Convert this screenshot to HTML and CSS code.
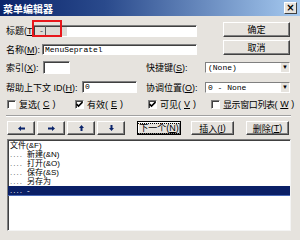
FILE: index.html
```html
<!DOCTYPE html>
<html lang="zh-CN">
<head>
    <meta charset="UTF-8">
    <title>菜单编辑器</title>
    <link rel="stylesheet" href="styles.css">
</head>
<body>
    <div class="window">
        <div class="titlebar">
            <span class="title">菜单编辑器</span>
            <span class="close-btn">×</span>
        </div>

        <div class="top">
            <div class="fields">
                <div class="row row-caption">
                    <label class="lbl lbl-caption">标题(<u>T</u>):</label>
                    <div class="input input-caption"><span class="caret">-</span></div>
                </div>
                <div class="row row-name">
                    <label class="lbl lbl-name">名称(<u>M</u>):</label>
                    <div class="input input-name mono">MenuSepratel</div>
                </div>
            </div>
            <div class="actions">
                <div class="btn btn-wide">确定</div>
                <div class="btn btn-wide">取消</div>
            </div>
            <!-- highlight drawn over the caption box -->
            <div class="marker"></div>
        </div>

        <div class="row row-index">
            <label class="lbl lbl-index">索引(<u>X</u>):</label>
            <div class="input input-index"></div>
            <label class="lbl lbl-right">快捷键(<u>S</u>):</label>
            <div class="combo"><span class="mono">(None)</span><span class="drop">▼</span></div>
        </div>

        <div class="row row-help">
            <label class="lbl lbl-help">帮助上下文 ID(<u>H</u>):</label>
            <div class="input input-help mono">0</div>
            <label class="lbl lbl-right lbl-neg">协调位置(<u>O</u>):</label>
            <div class="combo"><span class="mono">0 - None</span><span class="drop">▼</span></div>
        </div>

        <div class="row checks">
            <div class="check check-1"><span class="box"></span>复选(<u>C</u>)</div>
            <div class="check check-2"><span class="box"><svg width="7" height="7" viewBox="0 0 7 7"><path d="M0.5 3 L2.5 5 L6.5 1" fill="none" stroke="#000" stroke-width="1.6"/></svg></span>有效(<u>E</u>)</div>
            <div class="check check-3"><span class="box"><svg width="7" height="7" viewBox="0 0 7 7"><path d="M0.5 3 L2.5 5 L6.5 1" fill="none" stroke="#000" stroke-width="1.6"/></svg></span>可见(<u>V</u>)</div>
            <div class="check check-4"><span class="box"></span>显示窗口列表(<u>W</u>)</div>
        </div>

        <div class="separator"></div>

        <div class="row buttons">
            <div class="btn btn-arrow"><svg width="7" height="5" viewBox="0 0 7 5"><path d="M0 2.5 L3 0 V1.5 H7 V3.5 H3 V5 Z" fill="#0a246a"/></svg></div>
            <div class="btn btn-arrow"><svg width="7" height="5" viewBox="0 0 7 5"><path d="M7 2.5 L4 0 V1.5 H0 V3.5 H4 V5 Z" fill="#0a246a"/></svg></div>
            <div class="btn btn-arrow"><svg width="5" height="6" viewBox="0 0 5 6"><path d="M2.5 0 L5 3 H3.5 V6 H1.5 V3 H0 Z" fill="#0a246a"/></svg></div>
            <div class="btn btn-arrow"><svg width="5" height="6" viewBox="0 0 5 6"><path d="M2.5 6 L5 3 H3.5 V0 H1.5 V3 H0 Z" fill="#0a246a"/></svg></div>
            <div class="btn btn-next"><span class="focus">下一个(<u>N</u>)</span></div>
            <div class="btn btn-insert">插入(<u>I</u>)</div>
            <div class="btn btn-delete">删除(<u>T</u>)</div>
        </div>

        <div class="menu-list">
            <div class="item">文件(&amp;F)</div>
            <div class="item"><span class="dots">....</span>新建(&amp;N)</div>
            <div class="item"><span class="dots">....</span>打开(&amp;O)</div>
            <div class="item"><span class="dots">....</span>保存(&amp;S)</div>
            <div class="item"><span class="dots">....</span>另存为</div>
            <div class="item selected"><span class="dots">....</span>-</div>
        </div>
    </div>
</body>
</html>
```

FILE: styles.css
```css
body {
    margin: 0;
    background: #e6e3de;
}

.window {
    width: 300px;
    height: 240px;
    background: #e6e3de;
    font-family: "Liberation Sans", "Noto Sans CJK SC", sans-serif;
    font-size: 9px;
    color: #000;
    overflow: hidden;
}

.titlebar {
    height: 16px;
    display: flex;
    align-items: center;
    justify-content: space-between;
    padding: 0 3px 0 3px;
    background: linear-gradient(to right, #0a246a 0%, #2a4a8c 35%, #a6caf0 100%);
    color: #fff;
    font-weight: bold;
    font-size: 10px;
}

.close-btn {
    width: 11px;
    height: 10px;
    line-height: 10px;
    text-align: center;
    background: #e6e3de;
    color: #000;
    font-size: 10px;
    font-family: "DejaVu Sans", sans-serif;
    border: 1px solid;
    border-color: #fff #404040 #404040 #fff;
}

.mono {
    font-family: "Liberation Mono", "DejaVu Sans Mono", monospace;
    font-size: 8px;
}

.row {
    display: flex;
    align-items: center;
}

.lbl {
    white-space: nowrap;
    flex: none;
}

.input {
    background: #fff;
    border: 1px solid;
    border-color: #808080 #fff #fff #808080;
    box-shadow: inset 1px 1px #404040;
    box-sizing: border-box;
    height: 12px;
    line-height: 10px;
    padding-left: 2px;
    white-space: nowrap;
    overflow: hidden;
}

/* top block */
.top {
    display: flex;
    position: relative;
    margin-top: 6px;
}

.fields {
    width: 217px;
    padding-left: 6px;
    box-sizing: border-box;
}

.row-caption {
    margin-top: 2px;
}

.lbl-caption {
    width: 27px;
}

.input-caption {
    width: 164px;
    background: linear-gradient(to right, #dcdad5 0, #dcdad5 33px, #fff 33px);
}

.caret {
    display: inline-block;
    padding-left: 4px;
    border-right: 1px solid #555;
    padding-right: 2px;
    color: #555;
}

.row-name {
    margin-top: 6px;
}

.lbl-name {
    width: 36px;
}

.input-name {
    width: 155px;
    height: 11px;
}

.actions {
    display: flex;
    flex-direction: column;
    gap: 3px;
    margin-left: 6px;
}

.marker {
    position: absolute;
    left: 32px;
    top: -2px;
    width: 30px;
    height: 17px;
    border: 2px solid #e8161b;
    box-sizing: border-box;
}

/* buttons */
.btn {
    display: flex;
    align-items: center;
    justify-content: center;
    box-sizing: border-box;
    background: #e6e3de;
    border: 1px solid;
    border-color: #fff #404040 #404040 #fff;
    box-shadow: inset -1px -1px #808080;
    white-space: nowrap;
}

.btn-wide {
    width: 67px;
    height: 15px;
}

/* index / shortcut rows */
.row-index {
    margin-top: 5px;
    padding-left: 6px;
    height: 13px;
}

.lbl-index {
    width: 37px;
}

.input-index {
    width: 27px;
    height: 13px;
}

.lbl-right {
    width: 59px;
    margin-left: 76px;
}

.combo {
    width: 85px;
    height: 11px;
    display: flex;
    align-items: center;
    justify-content: space-between;
    background: #fff;
    border: 1px solid;
    border-color: #808080 #fff #fff #808080;
    box-sizing: border-box;
    padding-left: 2px;
}

.drop {
    width: 9px;
    height: 9px;
    line-height: 9px;
    text-align: center;
    font-size: 6px;
    color: #000;
    background: #e6e3de;
    border-left: 1px solid #fff;
    box-sizing: border-box;
}

.row-help {
    margin-top: 7px;
    padding-left: 6px;
    height: 12px;
}

.lbl-help {
    width: 76px;
}

.input-help {
    width: 55px;
}

.lbl-neg {
    margin-left: 9px;
}

/* checkboxes */
.checks {
    margin-top: 6px;
    height: 10px;
}

.check {
    display: flex;
    align-items: center;
    gap: 3px;
    white-space: nowrap;
}

.check-1 { margin-left: 7px; width: 68px; }
.check-2 { width: 73px; }
.check-3 { width: 63px; }
.check-4 { letter-spacing: -0.4px; }

.box {
    width: 9px;
    height: 9px;
    box-sizing: border-box;
    background: #fff;
    border: 1px solid;
    border-color: #808080 #fff #fff #808080;
    box-shadow: inset 1px 1px #404040;
    display: flex;
    align-items: center;
    justify-content: center;
}

.separator {
    margin: 6px 9px 0 6px;
    border-top: 1px solid #a0a0a0;
    border-bottom: 1px solid #fff;
}

/* move / edit buttons */
.buttons {
    margin-top: 4px;
    padding-left: 7px;
    height: 14px;
}

.btn-arrow {
    width: 28px;
    height: 14px;
    margin-right: 2px;
}

.btn-next {
    width: 44px;
    height: 14px;
    margin-left: 10px;
    border: 1px solid #000;
    box-shadow: inset 1px 1px #fff, inset -1px -1px #808080;
}

.focus {
    outline: 1px dotted #000;
    outline-offset: 0;
    padding: 0 1px;
    line-height: 9px;
}

.btn-insert {
    width: 43px;
    height: 14px;
    margin-left: 10px;
}

.btn-delete {
    width: 43px;
    height: 14px;
    margin-left: 12px;
}

/* menu list */
.menu-list {
    margin: 4px 0 0 7px;
    width: 284px;
    height: 92px;
    box-sizing: border-box;
    background: #fff;
    border: 1px solid;
    border-color: #808080 #f4f4f4 #f4f4f4 #808080;
    box-shadow: inset 1px 1px #404040;
    padding-top: 1px;
}

.item {
    height: 9px;
    line-height: 9px;
    padding-left: 2px;
    font-size: 8px;
    white-space: nowrap;
    overflow: hidden;
}

.dots {
    display: inline-block;
    width: 17px;
    letter-spacing: 1px;
    color: #555;
}

.selected {
    background: #0a1f66;
    color: #fff;
    border-bottom: 1px solid #4a6ab8;
}

.selected .dots {
    color: #fff;
}
```
